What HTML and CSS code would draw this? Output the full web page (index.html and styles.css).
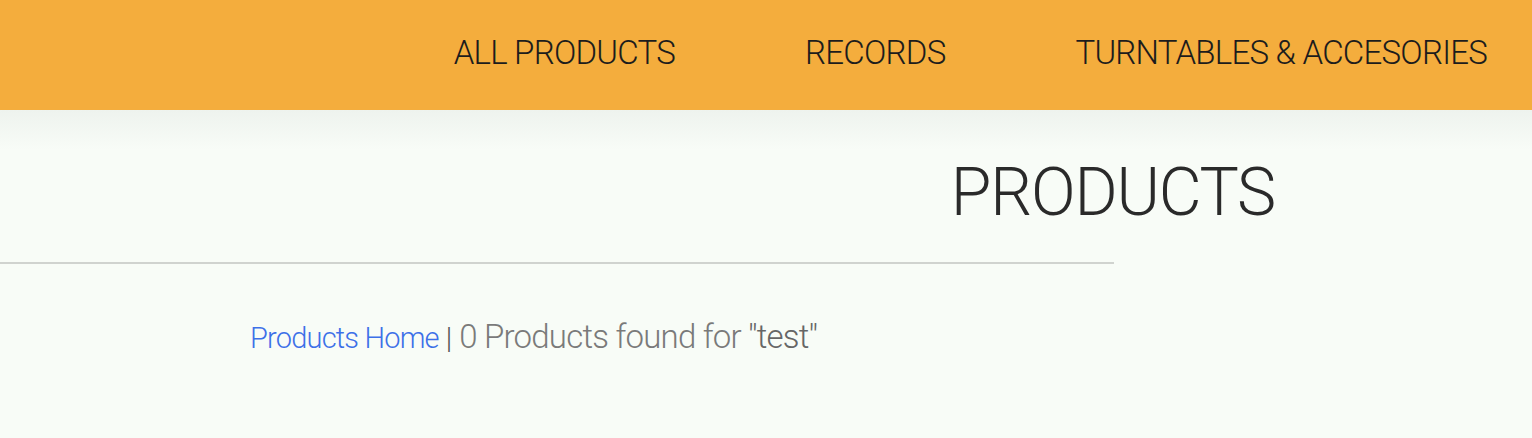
FILE: index.html
```html
<!DOCTYPE html>
<html>
<head>
<meta charset="utf-8">
<link rel="stylesheet" href="styles.css">
</head>
<body>
<header class="topbar">
  <nav class="nav">
    <a class="nav-link" href="#">ALL PRODUCTS</a>
    <a class="nav-link" href="#">RECORDS</a>
    <a class="nav-link" href="#">TURNTABLES &amp; ACCESORIES</a>
  </nav>
</header>
<main class="content">
  <div class="title-row">
    <h1 class="title">PRODUCTS</h1>
  </div>
  <hr class="rule">
  <p class="crumbs"><a class="crumb-link" href="#">Products Home</a> <span class="sep">|</span> <span class="results">0 Products found for <span class="query">"test"</span></span></p>
</main>
</body>
</html>
```
FILE: styles.css
```css
html, body {
  margin: 0;
  padding: 0;
}
body {
  background: #f8fcf7;
  font-family: "Roboto Light", Roboto, "Liberation Sans", sans-serif;
  font-weight: 300;
  height: 438px;
  overflow: hidden;
}
.topbar {
  background: #f4ad3d;
  height: 110px;
  display: flex;
  justify-content: flex-end;
  align-items: center;
  padding-right: 45px;
}
.nav {
  display: flex;
  gap: 130px;
}
.nav-link {
  color: #1c1c1c;
  text-decoration: none;
  font-size: 33px;
  font-weight: 300;
  letter-spacing: -0.75px;
  line-height: 1;
  padding-bottom: 6px;
}
.content {
  background: linear-gradient(#eef3ee, #f8fcf7 40px);
  height: 328px;
}
.title-row {
  width: 1114px;
  display: flex;
  justify-content: flex-end;
  padding-top: 45px;
}
.title {
  margin: 0 -161px 0 0;
  font-size: 66px;
  font-weight: 300;
  color: #2a2a2a;
  letter-spacing: -1.2px;
  line-height: 76px;
}
.rule {
  width: 1114px;
  margin: 31px 0 0 0;
  border: 0;
  height: 2px;
  background: #d0d3cf;
}
.crumbs {
  margin: 53px 0 0 250px;
  font-size: 29px;
  line-height: 40px;
  color: #555;
}
.crumb-link {
  color: #3d70e8;
  text-decoration: none;
  letter-spacing: -0.8px;
}
.sep {
  color: #555;
}
.results {
  font-size: 33px;
  letter-spacing: -0.8px;
  color: #7a7a7a;
}
.query {
  color: #666;
}
```
